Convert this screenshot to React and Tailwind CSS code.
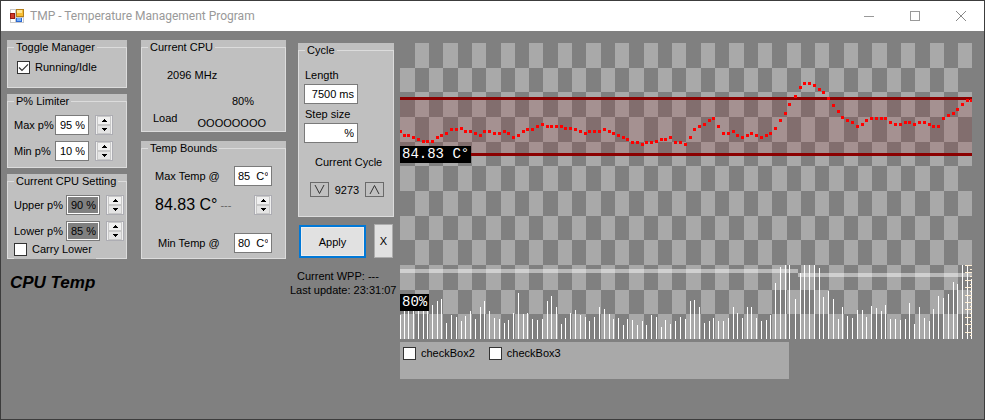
import React from "react";

const SAMPLE_X = [
  0, 4, 8, 13, 18, 23, 27, 32, 37, 41, 46, 51, 56, 61, 65, 70, 75, 80, 84, 89, 94, 99, 104, 108, 113, 118, 123, 127, 132, 137,
  142, 147, 151, 156, 161, 165, 170, 175, 180, 185, 189, 194, 199, 204, 209, 213, 218, 223, 227, 232, 237, 242, 246, 251, 256,
  261, 265, 270, 275, 280, 285, 290, 294, 299, 304, 309, 313, 318, 323, 328, 333, 337, 342, 347, 351, 356, 361, 366, 370, 375,
  380, 385, 389, 395, 400, 404, 409, 414, 419, 423, 428, 433, 438, 442, 447, 452, 457, 462, 466, 471, 476, 481, 485, 490, 495,
  500, 505, 509, 514, 519, 524, 529, 533, 538, 543, 548, 553, 557, 562, 567, 571,
];

const TEMPERATURE_Y = [
  88, 92, 92, 94, 96, 98, 98, 98, 94, 92, 90, 86, 86, 85, 88, 88, 90, 92, 88, 88, 90, 90, 88, 90, 94, 92, 88, 86, 86, 83,
  81, 83, 83, 83, 83, 85, 85, 86, 88, 90, 88, 88, 88, 86, 88, 90, 92, 94, 96, 99, 99, 101, 99, 99, 98,
  96, 96, 94, 99, 99, 101, 94, 86, 83, 81, 77, 75, 83, 90, 90, 88, 92, 94, 92, 90, 92, 94, 92, 90, 85,
  77, 70, 61, 53, 44, 40, 40, 42, 46, 49, 55, 62, 68, 74, 77, 79, 83, 81, 77, 75, 75, 75, 75, 79, 81,
  81, 79, 79, 81, 79, 79, 81, 83, 83, 75, 72, 70, 66, 61, 57, 57,
];

const LOAD_HEIGHT = [
  24, 32, 32, 33, 34, 34, 32, 34, 38, 40, 16, 24, 22, 18, 23, 28, 20, 32, 38, 28, 21, 20, 16, 19, 26, 46, 25, 26, 20, 19,
  20, 38, 43, 32, 15, 21, 26, 29, 24, 22, 18, 22, 32, 30, 25, 20, 21, 14, 20, 19, 14, 18, 14, 24, 22,
  12, 19, 15, 18, 22, 20, 38, 39, 32, 16, 18, 21, 18, 18, 21, 32, 26, 21, 32, 32, 21, 18, 19, 24, 56,
  72, 74, 74, 40, 66, 74, 74, 74, 71, 42, 48, 40, 20, 32, 23, 21, 29, 29, 22, 33, 31, 28, 34, 20, 20,
  19, 20, 36, 15, 32, 21, 18, 30, 43, 41, 45, 57, 55, 74, 74, 60,
];

const COLUMNS = 40;
const ROWS = 12;
const CHART_W = 572;
const CHART_H = 296;

function Chart() {
  const cells = [];
  for (let r = 0; r < ROWS; r++) {
    for (let c = 0; c < COLUMNS; c++) {
      if ((r + c) % 2 === 0) continue;
      const x = Math.ceil((c * CHART_W) / COLUMNS);
      const y = Math.round((r * CHART_H) / ROWS);
      const right = Math.ceil(((c + 1) * CHART_W) / COLUMNS);
      const bottom = Math.round(((r + 1) * CHART_H) / ROWS);
      cells.push(<rect key={`${r}-${c}`} x={x} y={y} width={right - x} height={bottom - y} fill="#a9a9a9" />);
    }
  }
  return (
    <div className="relative">
      <svg
        className="block h-[296px] w-full"
        viewBox={`0 0 ${CHART_W} ${CHART_H}`}
        preserveAspectRatio="none"
        shapeRendering="crispEdges"
        role="img"
        aria-label="Temperature and load history"
      >
        {cells}
        <rect x="0" y="57" width="572" height="53" fill="#8b0000" fillOpacity="0.142" />
        <rect x="0" y="54" width="572" height="3" fill="#8b0000" />
        <rect x="0" y="110" width="572" height="3" fill="#8b0000" />
        <rect x="0" y="226" width="398" height="4" fill="#fff" fillOpacity="0.45" />
        <rect x="398" y="230" width="174" height="4" fill="#fff" fillOpacity="0.45" />
        {SAMPLE_X.map((x, i) => (
          <rect key={x} x={x} y={CHART_H - LOAD_HEIGHT[i]} width="1" height={LOAD_HEIGHT[i]} fill="#fff" />
        ))}
        {Array.from({ length: 20 }, (_, i) => {
          const width = i % 2 === 0 ? 7 : 2;
          return <rect key={i} x={CHART_W - width} y={Math.round(222 + i * 3.7)} width={width} height="1" fill="#ffefd5" />;
        })}
        {SAMPLE_X.map((x, i) => (
          <rect key={x} x={x - 1} y={TEMPERATURE_Y[i] - 1} width="3" height="3" fill="#f00" />
        ))}
      </svg>
      <ChartLabel className="top-[103px]">84.83 C°</ChartLabel>
      <ChartLabel className="top-[251px]">80%</ChartLabel>
    </div>
  );
}

function ChartLabel({ className, children }) {
  return (
    <span
      className={`absolute left-0 bg-black px-[2px] font-['Liberation_Mono',monospace] text-[14px] leading-[17px] whitespace-pre text-white ${className}`}
    >
      {children}
    </span>
  );
}

function GroupBox({ title, className = "", children }) {
  return (
    <div className="bg-[#c0c0c0]">
      <fieldset className="min-w-0 border border-[#dcdcdc]">
        <legend className="ml-[6px] px-[2px] leading-[14px]">{title}</legend>
        <div className={className}>{children}</div>
      </fieldset>
    </div>
  );
}

function Field({ id, value, className = "", dim = false, label }) {
  const tone = dim ? "bg-[#808080] shadow-[inset_0_0_0_1px_#fff]" : "bg-white";
  return (
    <input
      id={id}
      type="text"
      aria-label={label}
      defaultValue={value}
      className={`h-[20px] border border-[#7a7a7a] px-[3px] text-right outline-none ${tone} ${className}`}
    />
  );
}

function Spinner({ label }) {
  return (
    <span className="flex h-[20px] w-[18px] shrink-0 flex-col border border-[#adadb3] bg-[#f0f0f0] px-px">
      <button type="button" aria-label={`${label} up`} className="flex flex-1 items-center justify-center border border-[#c8c8c8] bg-[#f0f0f0]">
        <svg className="block h-[3px] w-[5px]" viewBox="0 0 5 3" shapeRendering="crispEdges">
          <path d="M2 0h1v1h1v1h1v1H0V2h1V1h1z" />
        </svg>
      </button>
      <button type="button" aria-label={`${label} down`} className="flex flex-1 items-center justify-center border border-[#c8c8c8] bg-[#e4e4e4]">
        <svg className="block h-[3px] w-[5px]" viewBox="0 0 5 3" shapeRendering="crispEdges">
          <path d="M0 0h5v1H4v1H3v1H2V2H1V1H0z" />
        </svg>
      </button>
    </span>
  );
}

function Check({ label, checked = false, className = "" }) {
  return (
    <label className={`flex items-center gap-[5px] ${className}`}>
      <span className="grid h-[13px] w-[13px] shrink-0">
        <input
          type="checkbox"
          defaultChecked={checked}
          className="peer col-start-1 row-start-1 h-[13px] w-[13px] appearance-none border border-[#333] bg-white"
        />
        <svg
          className="pointer-events-none invisible col-start-1 row-start-1 h-[13px] w-[13px] peer-checked:visible"
          viewBox="0 0 13 13"
          fill="none"
          stroke="#333"
          strokeWidth="1.2"
        >
          <path d="M2 6.500l3 3 6-6.200" />
        </svg>
      </span>
      {label}
    </label>
  );
}

function LimitRow({ id, label, value, dim, labelWidth }) {
  return (
    <div className="flex h-[20px] items-center">
      <label htmlFor={id} className={`shrink-0 ${labelWidth}`}>
        {label}
      </label>
      <Field id={id} value={value} dim={dim} className="mr-[6px] w-[34px]" />
      <Spinner label={label} />
    </div>
  );
}

function TitleBar() {
  return (
    <header className="flex h-[30px] items-center bg-white pl-[9px] text-[#999]">
      <svg className="h-[14px] w-[14px]" viewBox="0 0 14 14" shapeRendering="crispEdges">
        <path d="M0 0h14v14H0z" fill="#c9c9c9" />
        <path d="M1 1h4v3H1zM1 10h4v3H1zM12 9h1v4h-1z" fill="#fff" />
        <rect x="6" y="0" width="8" height="8" fill="#b57f1a" />
        <rect x="7" y="1" width="6" height="6" fill="#f7bf35" />
        <rect x="7" y="1" width="5" height="3" fill="#fde595" />
        <rect x="0" y="4" width="5" height="6" fill="#96180e" />
        <rect x="1" y="5" width="3" height="4" fill="#cf3a2a" />
        <rect x="6" y="9" width="6" height="4" fill="#2c68d2" />
        <rect x="7" y="9" width="4" height="3" fill="#78b0f8" />
      </svg>
      <h1 className="ml-[6px] flex-1 font-['Roboto','Segoe_UI',sans-serif] text-[12px] whitespace-nowrap">
        TMP - Temperature Management Program
      </h1>
      <button type="button" aria-label="Minimize" className="flex h-full w-[46px] items-center justify-center">
        <svg className="h-[11px] w-[11px]" viewBox="0 0 11 11" shapeRendering="crispEdges">
          <rect x="0" y="5" width="10" height="1" fill="#999" />
        </svg>
      </button>
      <button type="button" aria-label="Maximize" className="flex h-full w-[46px] items-center justify-center">
        <svg className="h-[11px] w-[11px]" viewBox="0 0 11 11" shapeRendering="crispEdges">
          <rect x="0.5" y="0.5" width="9" height="9" fill="none" stroke="#999" />
        </svg>
      </button>
      <button type="button" aria-label="Close" className="flex h-full w-[46px] items-center justify-center">
        <svg className="h-[11px] w-[11px]" viewBox="0 0 11 11">
          <path d="M0 0l10 10M10 0l-10 10" fill="none" stroke="#888" />
        </svg>
      </button>
    </header>
  );
}

export default function App() {
  return (
    <div className="flex min-h-screen flex-col border border-[#3c3c3c] bg-[#808080] font-['Liberation_Sans',Arial,sans-serif] text-[11px] leading-[14px] whitespace-nowrap text-black">
      <TitleBar />
      <main className="flex flex-1 items-start pt-[9px] pr-[12px] pl-[6px]">
        <div className="flex w-[120px] shrink-0 flex-col gap-[6px]">
          <GroupBox title="Toggle Manager" className="pt-[3px] pb-[10px] pl-[9px]">
            <Check label="Running/Idle" checked className="h-[20px]" />
          </GroupBox>
          <GroupBox title="P% Limiter" className="flex flex-col gap-[6px] pt-[7px] pb-[6px] pl-[6px]">
            <LimitRow id="max-p" label="Max p%" value="95 %" labelWidth="w-[41px]" />
            <LimitRow id="min-p" label="Min p%" value="10 %" labelWidth="w-[41px]" />
          </GroupBox>
          <GroupBox title="Current CPU Setting" className="flex flex-col gap-[6px] pt-[7px] pl-[6px]">
            <LimitRow id="upper-p" label="Upper p%" value="90 %" dim labelWidth="w-[52px]" />
            <LimitRow id="lower-p" label="Lower p%" value="85 %" dim labelWidth="w-[52px]" />
            <Check label="Carry Lower" className="-mt-[6px] -mb-px h-[18px] w-[82px] bg-[#c0c0c0] pb-[2px]" />
          </GroupBox>
          <h2 className="mt-[8px] pl-[3px] font-['Comic_Sans_MS','Liberation_Sans',sans-serif] text-[17px] leading-[20px] font-bold italic">
            CPU Temp
          </h2>
        </div>

        <div className="ml-[14px] flex w-[145px] shrink-0 flex-col gap-[9px]">
          <GroupBox title="Current CPU" className="pt-[14px] pb-px pl-[11px]">
            <p className="pl-[14px]">2096 MHz</p>
            <p className="mt-[12px] pr-[31px] text-right">80%</p>
            <div className="flex justify-between pt-[3px] pr-[19px]">
              <span>Load</span>
              <span className="pt-[5px]">OOOOOOOO</span>
            </div>
          </GroupBox>
          <GroupBox title="Temp Bounds" className="pt-[11px] pr-[13px] pb-[5px] pl-[13px]">
            <div className="flex items-center justify-between">
              <label htmlFor="max-temp">Max Temp @</label>
              <Field id="max-temp" value="85  C°" className="w-[38px]" />
            </div>
            <div className="mt-[9px] flex h-[20px] items-center">
              <span className="text-[16px]">84.83 C°</span>
              <span className="ml-[3px] flex-1 text-[#666]">---</span>
              <Spinner label="Temperature bounds" />
            </div>
            <div className="mt-[18px] flex items-center justify-between pl-[3px]">
              <label htmlFor="min-temp">Min Temp @</label>
              <Field id="min-temp" value="80  C°" className="w-[38px]" />
            </div>
          </GroupBox>
        </div>

        <div className="flex w-[109px] shrink-0 flex-col pt-[3px] pl-[4px]">
          <div className="ml-[8px] w-[96px]">
            <GroupBox title="Cycle" className="flex flex-col items-start pt-[11px] pb-[19px] pl-[5px]">
              <label htmlFor="cycle-length" className="pl-px">
                Length
              </label>
              <Field id="cycle-length" value="7500 ms" className="mt-[2px] w-[54px]" />
              <label htmlFor="step-size" className="mt-[3px] pl-px">
                Step size
              </label>
              <Field id="step-size" value="%" className="mt-[2px] w-[54px]" />
              <p className="mt-[12px] pl-[11px]">Current Cycle</p>
              <div className="mt-[13px] ml-[6px] flex h-[15px] w-[74px] items-center justify-between">
                <button type="button" aria-label="Previous cycle" className="flex h-[15px] w-[19px] items-center justify-center border border-[#6a6a6a]">
                  <svg className="h-[9px] w-[11px]" viewBox="0 0 11 9" fill="none" stroke="#333">
                    <path d="M1 0l4.500 8.500L10 0" />
                  </svg>
                </button>
                <span>9273</span>
                <button type="button" aria-label="Next cycle" className="flex h-[15px] w-[19px] items-center justify-center border border-[#6a6a6a]">
                  <svg className="h-[9px] w-[11px]" viewBox="0 0 11 9" fill="none" stroke="#333">
                    <path d="M1 9l4.500-8.500L10 9" />
                  </svg>
                </button>
              </div>
            </GroupBox>
          </div>
          <div className="mt-[7px] ml-[9px] flex gap-[8px]">
            <button
              type="button"
              className="mt-px h-[33px] w-[67px] border-2 border-[#0078d7] bg-[#e1e1e1] shadow-[inset_0_0_0_1px_#eee]"
            >
              Apply
            </button>
            <button type="button" className="h-[34px] w-[19px] border border-[#adadad] bg-[#e1e1e1]">
              X
            </button>
          </div>
          <div className="mt-[11px]">
            <p className="pl-[7px]">Current WPP: ---</p>
            <p>Last update: 23:31:07</p>
          </div>
        </div>

        <div className="ml-[5px] min-w-0 flex-1 pt-[3px]">
          <Chart />
          <div className="mt-[3px] flex h-[37px] w-[68%] gap-[14px] bg-[#a9a9a9] pt-[4px] pl-[3px]">
            <Check label="checkBox2" className="h-[14px]" />
            <Check label="checkBox3" className="h-[14px]" />
          </div>
        </div>
      </main>
    </div>
  );
}
